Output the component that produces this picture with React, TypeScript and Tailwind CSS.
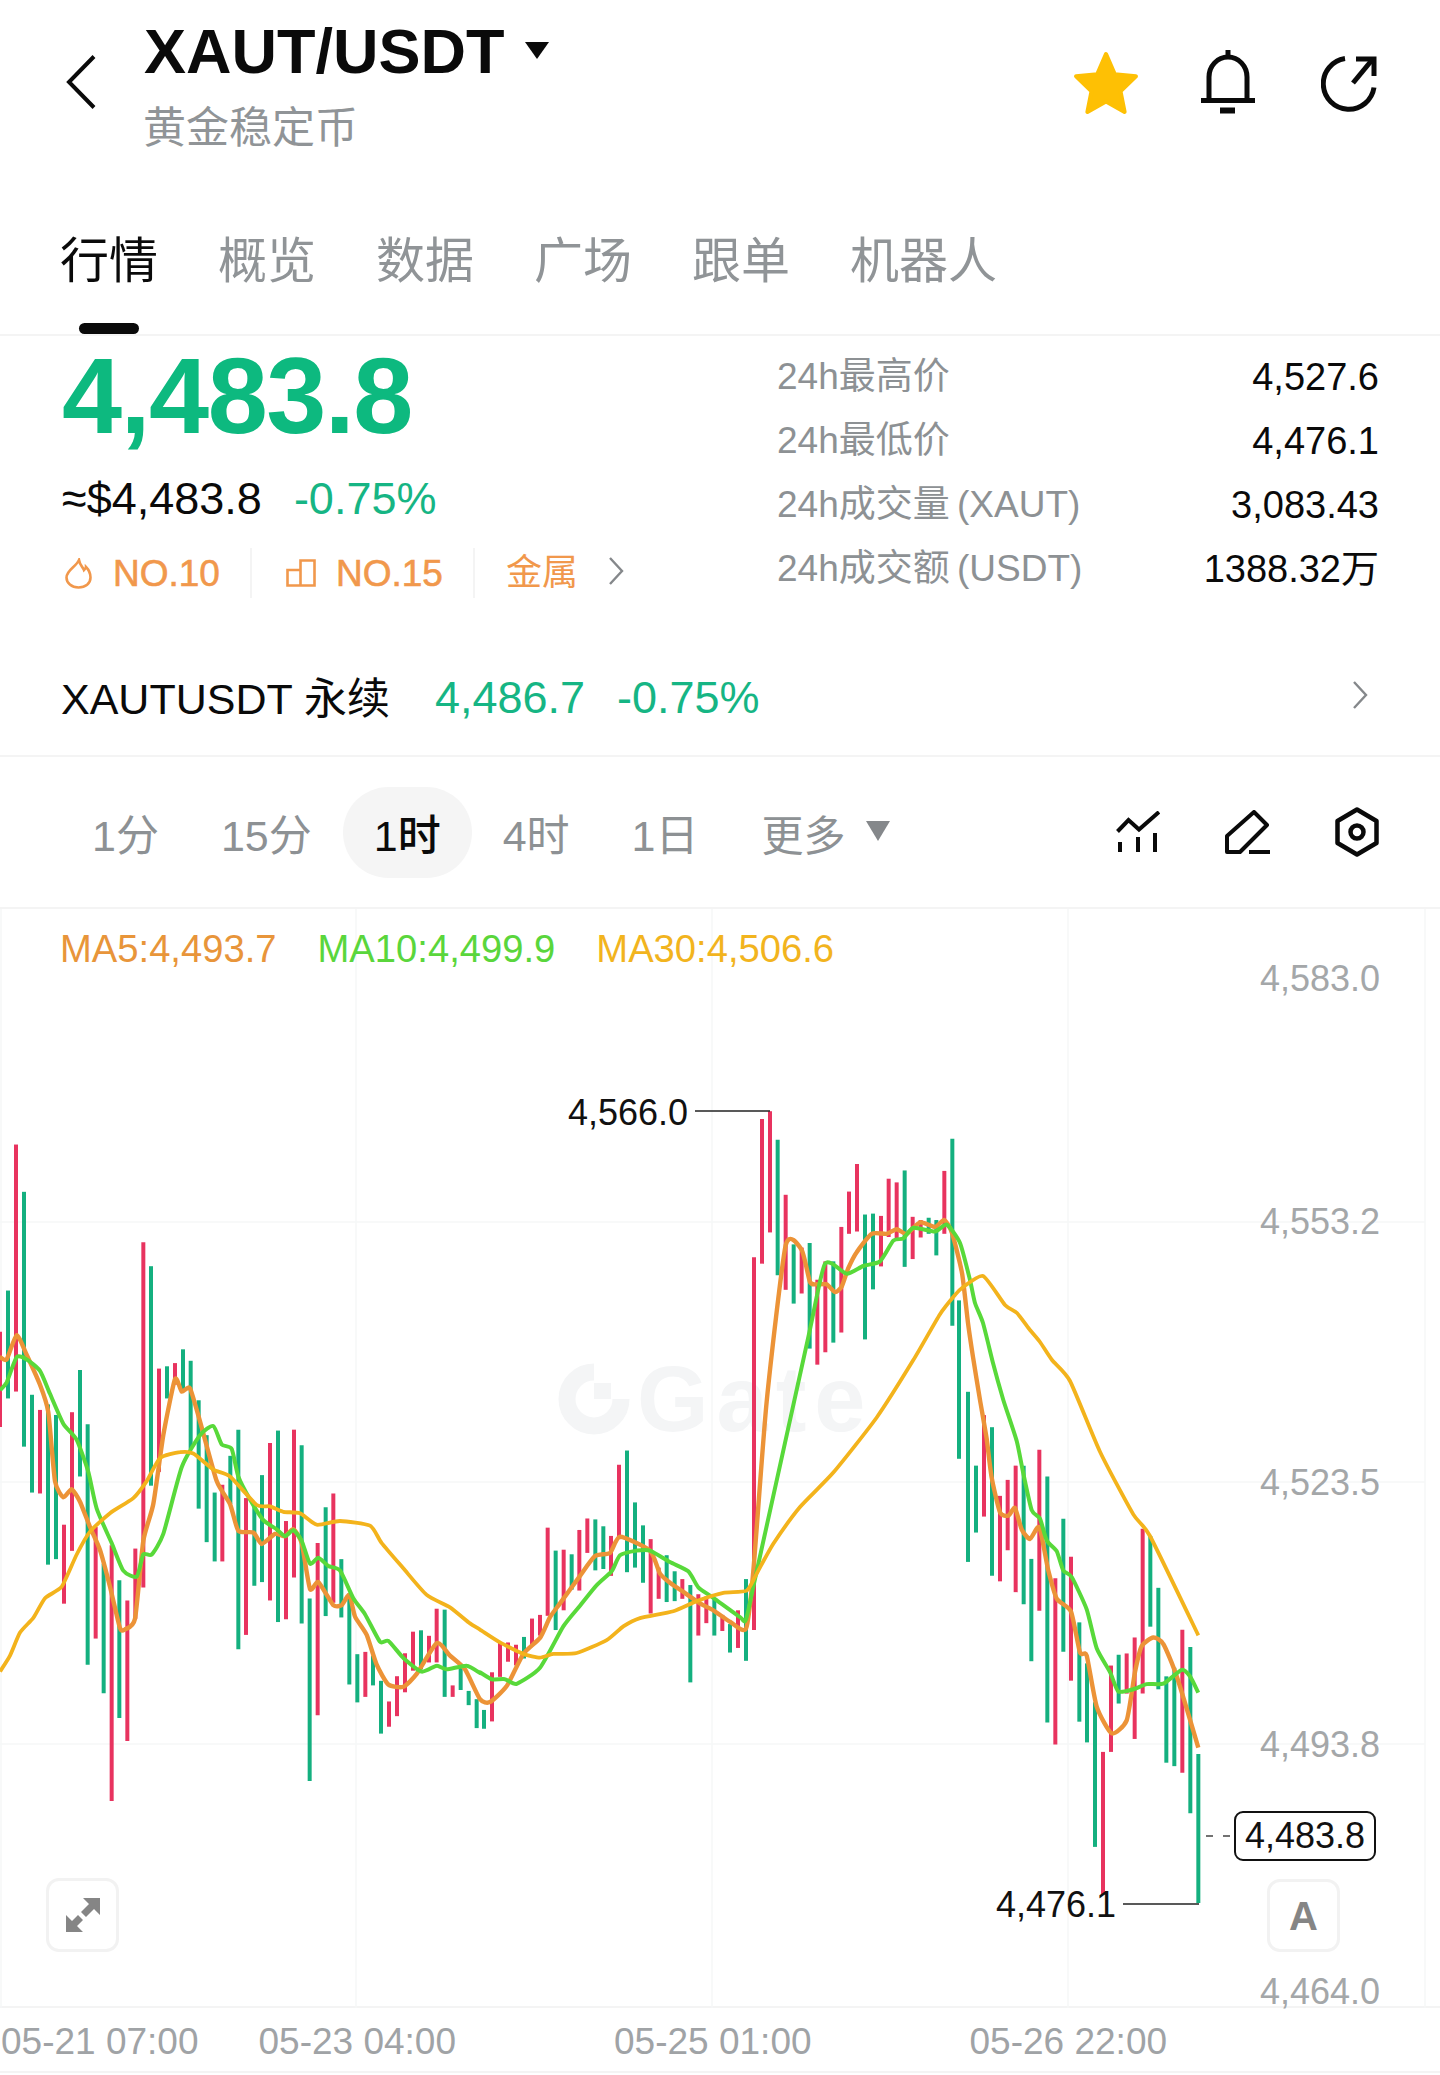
import React from 'react';

type Bar = [number, number, number, 'r' | 'g'];
type Pt = [number, number];

// chart data was read off in three strips, each with its own scale
const s5 = ([x, y]: Pt): Pt => [x / 3, 1100 + y / 2.178];
const s6 = ([x, y]: Pt): Pt => [480 + x / 3, 1080 + y / 2.178];
const s7 = ([x, y]: Pt): Pt => [960 + x / 3, 1400 + y / 2.316];

const bars5: Bar[] = [
  [0, 505, 712, 'r'], [24, 415, 650, 'g'], [48, 97, 635, 'r'], [72, 200, 755, 'g'], [96, 642, 855, 'g'],
  [120, 675, 857, 'r'], [144, 663, 1012, 'g'], [168, 686, 1000, 'g'], [192, 925, 1097, 'r'], [216, 680, 982, 'r'],
  [240, 588, 820, 'g'], [263, 706, 1230, 'g'], [287, 930, 1173, 'r'], [311, 1010, 1292, 'g'], [335, 970, 1527, 'r'],
  [358, 1046, 1346, 'g'], [382, 1090, 1396, 'r'], [406, 977, 1130, 'r'], [430, 310, 1062, 'r'], [453, 362, 840, 'g'],
  [477, 585, 810, 'r'], [501, 580, 650, 'g'], [525, 573, 620, 'r'], [549, 543, 630, 'g'], [572, 568, 760, 'g'],
  [596, 654, 890, 'g'], [620, 730, 963, 'g'], [644, 855, 1005, 'g'], [667, 838, 1005, 'r'], [691, 775, 880, 'g'],
  [715, 718, 1196, 'g'], [738, 867, 1165, 'r'], [763, 880, 1058, 'g'], [786, 817, 1050, 'g'], [810, 747, 1090, 'r'],
  [834, 720, 1137, 'g'], [858, 917, 1131, 'r'], [882, 718, 1040, 'r'], [905, 752, 1140, 'g'], [929, 1086, 1483, 'g'],
  [953, 965, 1340, 'r'], [977, 887, 1124, 'g'], [1000, 857, 1095, 'r'], [1024, 1000, 1127, 'g'], [1048, 1075, 1273, 'g'],
  [1072, 1207, 1312, 'g'], [1096, 1202, 1300, 'r'], [1119, 1210, 1275, 'g'], [1143, 1265, 1380, 'g'], [1167, 1310, 1365, 'r'],
  [1191, 1255, 1342, 'r'], [1215, 1205, 1290, 'r'], [1239, 1158, 1243, 'r'], [1263, 1155, 1240, 'g'], [1287, 1167, 1225, 'r'],
  [1310, 1108, 1225, 'r'], [1334, 1110, 1300, 'g'], [1358, 1275, 1300, 'r'], [1382, 1235, 1285, 'g'], [1406, 1287, 1318, 'g'],
  [1430, 1305, 1368, 'g'],
];

const bars6: Bar[] = [
  [12, 1372, 1413, 'g'], [36, 1290, 1397, 'r'], [60, 1225, 1300, 'r'], [84, 1225, 1267, 'r'], [108, 1230, 1275, 'r'],
  [132, 1213, 1260, 'g'], [156, 1173, 1230, 'r'], [180, 1165, 1210, 'r'], [203, 975, 1167, 'r'], [227, 1025, 1198, 'g'],
  [251, 1023, 1155, 'r'], [275, 1033, 1110, 'g'], [298, 980, 1112, 'r'], [322, 955, 1030, 'r'], [346, 957, 1068, 'g'],
  [370, 972, 1065, 'g'], [393, 993, 1080, 'r'], [417, 838, 1000, 'r'], [441, 807, 1072, 'g'], [465, 920, 1062, 'g'],
  [489, 970, 1095, 'g'], [512, 1000, 1162, 'r'], [536, 1062, 1130, 'r'], [560, 1035, 1137, 'g'], [584, 1070, 1135, 'g'],
  [607, 1087, 1130, 'r'], [631, 1100, 1312, 'g'], [655, 1120, 1210, 'r'], [679, 1125, 1183, 'r'], [703, 1130, 1210, 'g'],
  [727, 1165, 1200, 'r'], [750, 1185, 1247, 'g'], [774, 1155, 1237, 'r'], [798, 1087, 1265, 'g'], [822, 386, 1198, 'r'],
  [846, 85, 400, 'r'], [870, 68, 332, 'r'], [893, 130, 425, 'g'], [917, 250, 457, 'r'], [941, 358, 487, 'g'],
  [965, 365, 465, 'r'], [989, 355, 585, 'g'], [1012, 435, 620, 'r'], [1036, 395, 593, 'r'], [1060, 395, 572, 'g'],
  [1084, 320, 550, 'r'], [1107, 243, 335, 'r'], [1131, 183, 330, 'r'], [1155, 293, 565, 'g'], [1179, 291, 456, 'g'],
  [1203, 296, 406, 'r'], [1226, 215, 342, 'r'], [1250, 223, 348, 'r'], [1274, 197, 407, 'g'], [1298, 298, 390, 'r'],
  [1322, 305, 343, 'r'], [1346, 300, 335, 'g'], [1369, 305, 382, 'g'], [1393, 198, 335, 'r'], [1417, 128, 535, 'g'],
  [1437, 480, 825, 'g'],
];

const bars7: Bar[] = [
  [24, -19, 375, 'g'], [48, 152, 307, 'g'], [72, 35, 270, 'r'], [96, 63, 407, 'g'], [120, 222, 420, 'r'],
  [143, 185, 348, 'r'], [167, 152, 445, 'r'], [191, 152, 473, 'g'], [214, 368, 605, 'g'], [238, 115, 488, 'r'],
  [262, 177, 747, 'g'], [286, 413, 798, 'r'], [310, 275, 583, 'g'], [333, 363, 650, 'r'], [358, 515, 745, 'g'],
  [381, 610, 793, 'g'], [405, 700, 1035, 'g'], [429, 815, 1145, 'r'], [453, 615, 815, 'r'], [476, 590, 703, 'g'],
  [500, 587, 680, 'r'], [524, 550, 785, 'r'], [548, 298, 680, 'r'], [571, 315, 525, 'g'], [595, 435, 670, 'g'],
  [619, 640, 840, 'g'], [643, 620, 848, 'g'], [667, 532, 863, 'r'], [691, 572, 957, 'g'], [715, 820, 1165, 'g'],
];

const allBars = [
  ...bars5.map(([x, t, b, c]) => ({ a: s5([x, t]), b: s5([x, b]), c })),
  ...bars6.map(([x, t, b, c]) => ({ a: s6([x, t]), b: s6([x, b]), c })),
  ...bars7.map(([x, t, b, c]) => ({ a: s7([x, t]), b: s7([x, b]), c })),
];

const ma5: Pt[] = [
  ...([[0, 560], [20, 565], [50, 512], [80, 555], [120, 620], [145, 680], [165, 830], [190, 865], [215, 848], [240, 875], [270, 930], [300, 980], [330, 1060], [360, 1150], [375, 1153], [405, 1130], [430, 960], [460, 880], [490, 730], [525, 608], [545, 635], [570, 628], [600, 700], [650, 830], [690, 880], [715, 938], [760, 942], [785, 967], [825, 945], [855, 950], [880, 935], [905, 965], [930, 1065], [955, 1050], [1000, 1100], [1025, 1100], [1048, 1078], [1065, 1125], [1100, 1165], [1130, 1230], [1165, 1273], [1210, 1278], [1250, 1250], [1310, 1183], [1350, 1210], [1395, 1240], [1440, 1305]] as Pt[]).map(s5),
  ...([[30, 1355], [80, 1320], [130, 1250], [180, 1215], [210, 1170], [240, 1140], [300, 1080], [345, 1037], [390, 1030], [420, 995], [510, 1025], [540, 1075], [570, 1095], [610, 1115], [660, 1140], [700, 1155], [750, 1180], [798, 1195], [820, 1070], [860, 700], [917, 360], [965, 370], [990, 440], [1010, 445], [1040, 445], [1065, 462], [1085, 450], [1105, 410], [1130, 375], [1175, 335], [1220, 335], [1250, 325], [1280, 335], [1320, 310], [1365, 320], [1393, 305]] as Pt[]).map(s6),
  [952, 1233], [962, 1273], [968, 1323], [973, 1357],
  ...([[60, 0], [80, 90], [95, 180], [120, 260], [145, 268], [165, 250], [185, 300], [210, 322], [238, 295], [265, 395], [290, 460], [333, 490], [360, 585], [380, 592], [410, 710], [455, 772], [500, 742], [525, 630], [545, 570], [580, 550], [610, 565], [650, 640], [715, 805]] as Pt[]).map(s7),
];

const ma10: Pt[] = [
  ...([[0, 632], [20, 615], [50, 560], [80, 565], [120, 590], [150, 640], [190, 705], [230, 740], [265, 810], [290, 890], [335, 965], [370, 1025], [410, 1038], [430, 990], [455, 990], [490, 945], [545, 800], [600, 730], [640, 710], [665, 750], [695, 760], [715, 820], [750, 870], [790, 915], [830, 935], [855, 950], [880, 937], [905, 960], [930, 1010], [955, 997], [985, 1015], [1020, 1025], [1060, 1085], [1095, 1120], [1140, 1180], [1165, 1178], [1210, 1215], [1265, 1245], [1310, 1232], [1340, 1240], [1400, 1232], [1440, 1248]] as Pt[]).map(s5),
  ...([[0, 1290], [35, 1305], [75, 1305], [110, 1315], [180, 1280], [250, 1190], [300, 1145], [350, 1100], [395, 1070], [420, 1035], [470, 1025], [510, 1025], [570, 1050], [625, 1070], [655, 1105], [700, 1128], [780, 1170], [798, 1175], [830, 1070], [985, 560], [1035, 400], [1100, 422], [1150, 405], [1200, 395], [1240, 350], [1270, 345], [1300, 322], [1365, 330], [1400, 315]] as Pt[]).map(s6),
  [960, 1243], [970, 1280], [975, 1303], [983, 1323], [993, 1363],
  ...([[130, 0], [170, 95], [190, 170], [215, 255], [240, 275], [260, 325], [290, 350], [310, 395], [335, 410], [380, 485], [410, 575], [450, 630], [475, 675], [520, 670], [560, 658], [610, 657], [665, 625], [690, 640], [715, 678]] as Pt[]).map(s7),
];

const ma30: Pt[] = [
  ...([[0, 1245], [30, 1210], [60, 1160], [100, 1128], [135, 1085], [185, 1060], [230, 990], [270, 940], [330, 900], [400, 867], [440, 830], [480, 780], [540, 767], [580, 770], [640, 805], [690, 820], [770, 882], [810, 885], [850, 897], [900, 900], [950, 925], [1020, 917], [1110, 927], [1145, 965], [1210, 1020], [1280, 1078], [1350, 1105], [1410, 1140]] as Pt[]).map(s5),
  ...([[0, 1197], [60, 1225], [130, 1250], [180, 1258], [220, 1250], [290, 1248], [380, 1220], [430, 1190], [480, 1172], [580, 1157], [650, 1135], [730, 1117], [800, 1112], [830, 1075], [880, 1010], [960, 930], [1060, 855], [1190, 735], [1300, 610], [1380, 510]] as Pt[]).map(s6),
  [955, 1295], [962, 1288], [983, 1276], [1005, 1305], [1017, 1313], [1030, 1330], [1040, 1342], [1052, 1360], [1070, 1381],
  ...([[420, 120], [520, 265], [570, 315], [715, 545]] as Pt[]).map(s7),
];

// light curve smoothing between the sampled points
const toPath = (pts: Pt[]) => {
  let d = `M${pts[0][0].toFixed(1)} ${pts[0][1].toFixed(1)}`;
  for (let i = 0; i < pts.length - 1; i++) {
    const p0 = pts[i - 1] ?? pts[i];
    const p1 = pts[i];
    const p2 = pts[i + 1];
    const p3 = pts[i + 2] ?? p2;
    const c1x = p1[0] + (p2[0] - p0[0]) / 10;
    const c1y = p1[1] + (p2[1] - p0[1]) / 10;
    const c2x = p2[0] - (p3[0] - p1[0]) / 10;
    const c2y = p2[1] - (p3[1] - p1[1]) / 10;
    d += `C${c1x.toFixed(1)} ${c1y.toFixed(1)} ${c2x.toFixed(1)} ${c2y.toFixed(1)} ${p2[0].toFixed(1)} ${p2[1].toFixed(1)}`;
  }
  return d;
};

const tabs = ['行情', '概览', '数据', '广场', '跟单', '机器人'];
const stats = [
  { label: '24h最高价', value: '4,527.6' },
  { label: '24h最低价', value: '4,476.1' },
  { label: '24h成交量 (XAUT)', value: '3,083.43' },
  { label: '24h成交额 (USDT)', value: '1388.32万' },
];
const periods = ['1分', '15分', '1时', '4时', '1日'];

const Chevron = ({ className }: { className: string }) => (
  <svg viewBox="0 0 16 30" className={className} fill="none" stroke="#85888b" strokeWidth="2.4">
    <path d="M2 2l12 13L2 28" />
  </svg>
);

const Chart = () => (
  <div className="relative h-[1099px] border-b-2 border-[#f4f4f4]">
    {/* watermark */}
    <div className="absolute left-[558px] top-[454px] flex items-center">
      <svg viewBox="0 0 72 72" className="h-[72px] w-[72px]" fill="none">
        <path d="M36 9a27 27 0 1 0 27 27" stroke="#f4f5f6" strokeWidth="17" />
        <rect x="36" y="20" width="17" height="16" fill="#f4f5f6" />
      </svg>
      <span className="ml-[7px] text-[92px] font-bold leading-[72px] tracking-[8px] text-[#f4f5f6]">Gate</span>
    </div>

    <svg viewBox="0 909 1440 1099" className="absolute inset-0 h-[1099px] w-[1440px]">
      {[1222, 1482, 1744].map((y) => (
        <line key={y} x1="0" x2="1425" y1={y} y2={y} stroke="#f6f7f7" strokeWidth="1.5" />
      ))}
      {[1, 356, 712, 1068, 1425].map((x) => (
        <line key={x} x1={x} x2={x} y1="909" y2="2008" stroke="#f6f7f7" strokeWidth="1.5" />
      ))}
      {allBars.map((bar, i) => (
        <line
          key={i}
          x1={bar.a[0]}
          x2={bar.a[0]}
          y1={bar.a[1]}
          y2={bar.b[1]}
          stroke={bar.c === 'r' ? '#e8335f' : '#14b07f'}
          strokeWidth="4"
        />
      ))}
      <path d={toPath(ma5)} fill="none" stroke="#ec9337" strokeWidth="4.4" strokeLinejoin="round" />
      <path d={toPath(ma10)} fill="none" stroke="#58d93a" strokeWidth="4" strokeLinejoin="round" />
      <path d={toPath(ma30)} fill="none" stroke="#f3b31c" strokeWidth="3.8" strokeLinejoin="round" />
      <path d="M695 1111H770" stroke="#222" strokeWidth="1.5" />
      <path d="M1123 1904H1199" stroke="#222" strokeWidth="1.5" />
      <path d="M1206 1836h7M1223 1836h7" stroke="#444" strokeWidth="1.6" />
    </svg>

    <div className="absolute left-[60px] top-[18px] flex text-[38.2px] leading-[44px]">
      <span className="text-[#e8953a]">MA5:4,493.7</span>
      <span className="ml-[41px] text-[#5ad63c]">MA10:4,499.9</span>
      <span className="ml-[41px] text-[#f2b41e]">MA30:4,506.6</span>
    </div>

    {[
      { label: '4,583.0', top: 'top-[50px]' },
      { label: '4,553.2', top: 'top-[293px]' },
      { label: '4,523.5', top: 'top-[554px]' },
      { label: '4,493.8', top: 'top-[816px]' },
      { label: '4,464.0', top: 'top-[1063px]' },
    ].map((tick) => (
      <span key={tick.label} className={`absolute right-[60px] ${tick.top} text-[36px] leading-[40px] text-[#a4a7a9]`}>
        {tick.label}
      </span>
    ))}

    <span className="absolute left-[568px] top-[184px] text-[36px] leading-[40px] text-[#111]">4,566.0</span>
    <span className="absolute left-[996px] top-[976px] text-[36px] leading-[40px] text-[#111]">4,476.1</span>
    <span className="absolute left-[1234px] top-[902px] flex h-[50px] w-[142px] items-center justify-center rounded-[9px] border-2 border-[#111] text-[36px] text-[#111]">
      4,483.8
    </span>

    <div className="absolute left-[46px] top-[969px] flex h-[74px] w-[73px] items-center justify-center rounded-[13px] border-[3px] border-[#f2f2f2]">
      <svg viewBox="0 0 36 36" className="h-[36px] w-[36px]" fill="#858585">
        <path d="M35 1v17l-6-6-8 8-5-5 8-8-6-6zM1 35V18l6 6 6-6 5 5-6 6 6 6z" />
      </svg>
    </div>
    <div className="absolute left-[1267px] top-[970px] flex h-[73px] w-[73px] items-center justify-center rounded-[13px] border-[3px] border-[#f2f2f2] text-[40px] font-bold text-[#858585]">
      A
    </div>
  </div>
);

export default function App() {
  return (
    <div className="min-h-[2075px] bg-white font-['Liberation_Sans','Noto_Sans_CJK_SC',sans-serif] text-[#0a0a0a]">
      {/* Header */}
      <header className="flex h-[213px] pl-[66px] pr-[63px]">
        <svg viewBox="0 0 30 54" className="mt-[55px] h-[54px] w-[30px]" fill="none" stroke="#0a0a0a" strokeWidth="4">
          <path d="M28 1.500L3 27l25 25.500" />
        </svg>
        <div className="ml-[48px] mt-[16px]">
          <div className="flex items-start">
            <h1 className="text-[63px] font-bold leading-[70px]">XAUT/USDT</h1>
            <svg viewBox="0 0 26 18" className="ml-[19px] mt-[25px] h-[18px] w-[26px]" fill="#0a0a0a">
              <path d="M1 1h24L13 18z" />
            </svg>
          </div>
          <p className="-ml-px mt-[17px] text-[43px] leading-[50px] text-[#909497]">黄金稳定币</p>
        </div>

        <div className="ml-auto flex h-fit items-start pt-[50px]">
          <svg viewBox="0 0 64 62" className="mt-px h-[64px] w-[66px]" fill="#fec004" stroke="#fec004" strokeWidth="4" strokeLinejoin="round">
            <path d="M32 3l8.500 19.500L61 24.500 46 39l4 20-18-10-18 10 4-20L3 24.500l20.500-2z" />
          </svg>
          <svg viewBox="0 0 54 64" className="ml-[62px] h-[64px] w-[54px]" fill="none" stroke="#0a0a0a" strokeWidth="5">
            <path d="M8 50V27a19 20 0 0 1 38 0v23" />
            <path d="M27 0v8" />
            <path d="M0 50.500h54" />
            <path d="M19 60.500h15" strokeWidth="6" />
          </svg>
          <svg viewBox="0 0 56 56" className="ml-[66px] mt-[6px] h-[56px] w-[56px]" fill="none" stroke="#0a0a0a" strokeWidth="5">
            <path d="M24 2.500a25.500 25.500 0 1 0 29 29" />
            <path d="M32 27L51 4" />
            <path d="M35 3h18v17" />
          </svg>
        </div>
      </header>

      {/* Tabs */}
      <nav className="flex h-[123px] items-start gap-[60px] border-b-2 border-[#f4f4f4] pl-[60px] pt-[23px]">
        {tabs.map((tab, i) => (
          <div key={tab} className="relative">
            <span className={`block text-[49px] leading-[50px] ${i === 0 ? 'text-[#0a0a0a]' : 'text-[#909497]'}`}>{tab}</span>
            {i === 0 && <span className="absolute left-[19px] top-[87px] h-[11px] w-[60px] rounded-full bg-[#0a0a0a]" />}
          </div>
        ))}
      </nav>

      {/* Price block */}
      <section className="flex h-[304px] pl-[62px] pr-[61px]">
        <div className="w-[715px]">
          <div className="text-[108px] font-bold leading-[120px] tracking-[-1.5px] text-[#0db97f]">4,483.8</div>
          <div className="mt-[11px] flex h-[60px] items-center pt-[3px] text-[45px]">
            <span>≈$4,483.8</span>
            <span className="ml-[32px] text-[#16b584]">-0.75%</span>
          </div>
          <div className="mt-[21px] flex h-[50px] items-center text-[37px] text-[#f1984c]">
            <svg viewBox="0 0 27 31" className="ml-[3px] h-[31px] w-[27px]" fill="none" stroke="#f1984c" strokeWidth="2.600">
              <path d="M14 2c1 6 4 7 5 10 1-1 2-2 2-3 3 3 4.500 7 4.500 10.500 0 6-5 10-12 10S1.500 25 1.500 19.500C1.500 12 11 9 14 2z" />
            </svg>
            <span className="ml-[21px] pt-px [-webkit-text-stroke:0.6px_#f1984c]">NO.10</span>
            <span className="ml-[30px] h-[50px] w-[2px] bg-[#f4f4f4]" />
            <svg viewBox="0 0 30 28" className="ml-[34px] h-[28px] w-[30px]" fill="none" stroke="#f1984c" strokeWidth="2.600">
              <path d="M1.500 11h13v15.500h-13zM14.500 1.500h14v25h-14z" />
            </svg>
            <span className="ml-[20px] pt-px [-webkit-text-stroke:0.6px_#f1984c]">NO.15</span>
            <span className="ml-[30px] h-[50px] w-[2px] bg-[#f4f4f4]" />
            <span className="ml-[31px] text-[36px]">金属</span>
            <Chevron className="ml-[30px] mb-[4px] h-[30px] w-[16px]" />
          </div>
        </div>
        <dl className="flex-1 pt-[9px]">
          {stats.map((row) => (
            <div key={row.label} className="flex h-[64px] items-center justify-between">
              <dt className="text-[37px] text-[#8d9194] [word-spacing:-3px]">{row.label}</dt>
              <dd className="text-[38px]">{row.value}</dd>
            </div>
          ))}
        </dl>
      </section>

      {/* Perpetual row */}
      <section className="flex h-[117px] items-center border-b-2 border-[#f4f4f4] pl-[61px] pr-[72px]">
        <span className="pt-[3px] text-[43px]">XAUTUSDT 永续</span>
        <span className="ml-[45px] text-[45px] text-[#16b584]">4,486.7</span>
        <span className="ml-[32px] text-[45px] text-[#16b584]">-0.75%</span>
        <Chevron className="ml-auto mb-[5px] h-[30px] w-[16px]" />
      </section>

      {/* Period selector */}
      <section className="flex h-[152px] items-center border-b-2 border-[#f4f4f4] pl-[61px] pr-[61px] text-[43px] text-[#8d9194]">
        {periods.map((p) => (
          <span
            key={p}
            className={p === '1时' ? 'flex h-[91px] items-center rounded-[46px] bg-[#f5f5f5] px-[31px] pt-[8px] font-medium text-[#0a0a0a]' : 'px-[31px] pt-[8px]'}
          >
            {p}
          </span>
        ))}
        <span className="pl-[32px] pt-[8px] text-[42px]">更多</span>
        <svg viewBox="0 0 24 20" className="ml-[20px] mb-[3px] h-[20px] w-[24px]" fill="#85888b">
          <path d="M0 0h24L12 20z" />
        </svg>
        <div className="ml-auto flex items-center">
          <svg viewBox="0 0 44 42" className="h-[42px] w-[44px]" fill="none" stroke="#0a0a0a" strokeWidth="4">
            <path d="M1.500 20.500L12.500 9l10.500 9.500L43 1" />
            <path d="M4 31v10M22 26v15M39 22v19" />
          </svg>
          <svg viewBox="0 0 45 44" className="ml-[65px] h-[44px] w-[45px]" fill="none" stroke="#0a0a0a" strokeWidth="4">
            <path d="M2 26L29 2l13 13-27 27H2z" strokeLinejoin="round" />
            <path d="M24 42h21" />
          </svg>
          <svg viewBox="0 0 44 50" className="ml-[65px] h-[50px] w-[44px]" fill="none" stroke="#0a0a0a" strokeWidth="4.500" strokeLinejoin="round">
            <path d="M22 2.500l19.500 11.500v22L22 47.500 2.500 36V14z" />
            <circle cx="22" cy="25" r="6.500" />
          </svg>
        </div>
      </section>

      <Chart />

      {/* Time axis */}
      <div className="flex h-[65px] items-center border-b-2 border-[#f4f4f4] pl-px pt-[5px] text-[37px] text-[#a0a3a6]">
        <span>05-21 07:00</span>
        <span className="ml-[60px]">05-23 04:00</span>
        <span className="ml-[158px]">05-25 01:00</span>
        <span className="ml-[158px]">05-26 22:00</span>
      </div>
    </div>
  );
}
